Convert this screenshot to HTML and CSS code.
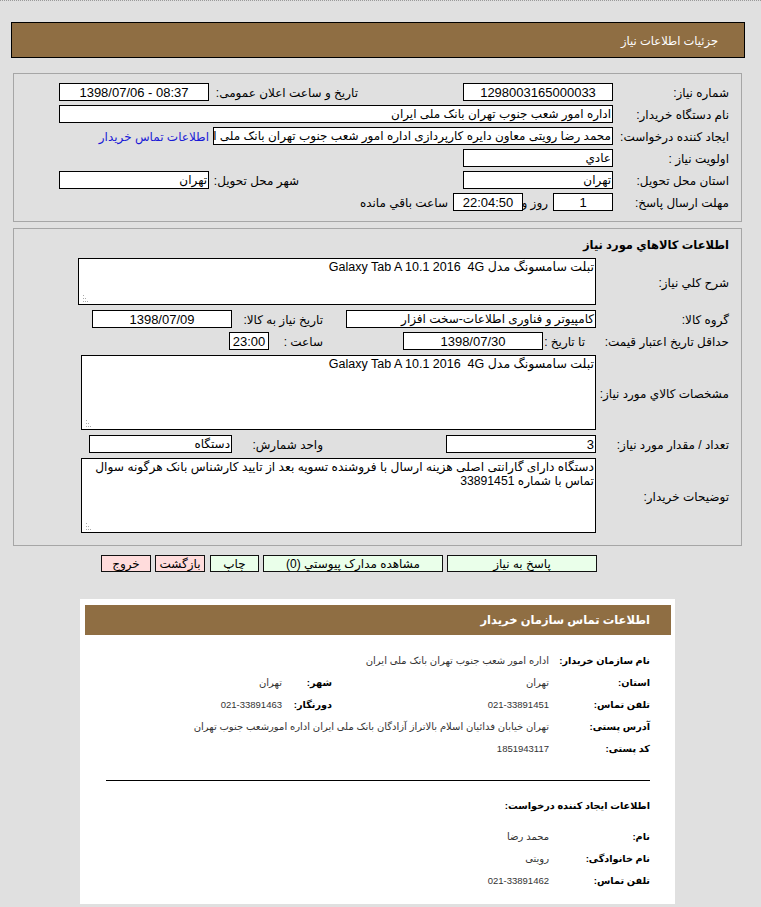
FILE: index.html
```html
<!DOCTYPE html>
<html lang="fa" dir="rtl">
<head>
    <meta charset="UTF-8">
    <title>جزئیات اطلاعات نیاز</title>
    <link rel="stylesheet" href="styles.css">
</head>
<body>
    <header class="page-title">جزئیات اطلاعات نیاز</header>

    <section class="panel panel-info">
        <div class="row cols-info">
            <label>شماره نیاز:</label>
            <div class="field center num">1298003165000033</div>
            <label class="label-mid">تاریخ و ساعت اعلان عمومی:</label>
            <div class="field center num" dir="ltr">1398/07/06 - 08:37</div>
        </div>
        <div class="row cols-info">
            <label>نام دستگاه خریدار:</label>
            <div class="field span-3">اداره امور شعب جنوب تهران بانک ملی ایران</div>
        </div>
        <div class="row cols-creator">
            <label>ایجاد کننده درخواست:</label>
            <div class="field">محمد رضا رویتی معاون دایره کارپردازی اداره امور شعب جنوب تهران بانک ملی ایران</div>
            <a class="contact-link" href="#contact">اطلاعات تماس خریدار</a>
        </div>
        <div class="row cols-info">
            <label>اولویت نیاز :</label>
            <div class="field">عادي</div>
        </div>
        <div class="row cols-info">
            <label>استان محل تحویل:</label>
            <div class="field">تهران</div>
            <label class="label-city">شهر محل تحویل:</label>
            <div class="field">تهران</div>
        </div>
        <div class="row cols-deadline">
            <label>مهلت ارسال پاسخ:</label>
            <div class="field center num">1</div>
            <span class="unit">روز و</span>
            <div class="field center num">22:04:50</div>
            <span class="unit">ساعت باقي مانده</span>
        </div>
    </section>

    <section class="panel panel-goods">
        <h2>اطلاعات كالاهاي مورد نياز</h2>

        <div class="area-row area-short">
            <label>شرح كلي نياز:</label>
            <textarea class="area area-first" readonly>تبلت سامسونگ مدل Galaxy Tab A 10.1 2016  4G</textarea>
        </div>
        <div class="row cols-group">
            <label>گروه کالا:</label>
            <div class="field">کامپیوتر و فناوری اطلاعات-سخت افزار</div>
            <label class="label-date">تاریخ نیاز به کالا:</label>
            <div class="field center num">1398/07/09</div>
        </div>
        <div class="row cols-valid">
            <label>حداقل تاریخ اعتبار قیمت:</label>
            <span class="unit-to">تا تاریخ :</span>
            <div class="field center num">1398/07/30</div>
            <span class="unit-time">ساعت :</span>
            <div class="field center num">23:00</div>
        </div>
        <div class="area-row area-tall">
            <label>مشخصات كالاي مورد نياز:</label>
            <textarea class="area" readonly>تبلت سامسونگ مدل Galaxy Tab A 10.1 2016  4G</textarea>
        </div>
        <div class="row cols-count">
            <label>تعداد / مقدار مورد نیاز:</label>
            <div class="field num">3</div>
            <label class="label-unit">واحد شمارش:</label>
            <div class="field">دستگاه</div>
        </div>
        <div class="area-row area-tall area-notes">
            <label>توضیحات خریدار:</label>
            <textarea class="area" readonly>دستگاه دارای گارانتی اصلی هزینه ارسال با فروشنده تسویه بعد از تایید کارشناس بانک هرگونه سوال تماس با شماره 33891451</textarea>
        </div>
    </section>

    <div class="actions">
        <button class="btn btn-green btn-reply">پاسخ به نیاز</button>
        <button class="btn btn-green btn-docs">مشاهده مدارک پیوستي (0)</button>
        <button class="btn btn-green btn-print">چاپ</button>
        <button class="btn btn-red btn-back">بازگشت</button>
        <button class="btn btn-red btn-exit">خروج</button>
    </div>

    <section class="contact" id="contact">
        <div class="contact-title">اطلاعات تماس سازمان خریدار</div>
        <div class="contact-body">
            <div class="c-row"><b>نام سازمان خریدار:</b><span>اداره امور شعب جنوب تهران بانک ملی ایران</span></div>
            <div class="c-row"><b>استان:</b><span class="c-val">تهران</span><b class="c-label2">شهر:</b><span>تهران</span></div>
            <div class="c-row"><b>تلفن تماس:</b><span class="c-val c-num">021-33891451</span><b class="c-label2">دورنگار:</b><span class="c-num">021-33891463</span></div>
            <div class="c-row"><b>آدرس پستی:</b><span>تهران خیابان فدائیان اسلام بالاتراز آزادگان بانک ملی ایران اداره امورشعب جنوب تهران</span></div>
            <div class="c-row"><b>کد پستی:</b><span class="c-num">1851943117</span></div>
            <hr>
            <h3>اطلاعات ایجاد کننده درخواست:</h3>
            <div class="c-row"><b>نام:</b><span>محمد رضا</span></div>
            <div class="c-row"><b>نام خانوادگی:</b><span>رویتی</span></div>
            <div class="c-row"><b>تلفن تماس:</b><span class="c-num">021-33891462</span></div>
        </div>
    </section>
</body>
</html>
```

FILE: styles.css
```css
html {
    background-color: #e0e0e0;
}

body {
    margin: 0;
    height: 907px;
    overflow: hidden;
    border-top: 1px dotted #999;
    box-sizing: border-box;
    font-family: "Liberation Sans", "DejaVu Sans", sans-serif;
    font-size: 12px;
    color: #000;
}

/* page title bar */
.page-title {
    margin: 21px 16px 0 11px;
    height: 36px;
    line-height: 36px;
    padding-right: 26px;
    box-sizing: border-box;
    background-color: #8f6e43;
    border: 1px solid #000;
    color: #fff;
    font-size: 11.5px;
}

.panel {
    margin: 0 19px 0 13px;
    border: 1px solid #a6a6a6;
    box-sizing: border-box;
}

.panel-info {
    margin-top: 15px;
    height: 149px;
    padding-top: 9px;
}

.panel-goods {
    margin-top: 6px;
    height: 318px;
    padding-top: 8px;
}

.panel h2 {
    margin: 0 12px 5px 0;
    height: 16px;
    line-height: 16px;
    font-size: 11.5px;
}

/* form rows: first column is always the label on the right */
.row {
    display: grid;
    height: 18px;
    margin-bottom: 4px;
    align-items: center;
}

.row label,
.area-row label {
    padding-right: 12px;
    white-space: nowrap;
}

.row label,
.row span {
    padding-top: 1px;
}

.cols-info { grid-template-columns: 128px 150px 254px 150px; }
.cols-creator { grid-template-columns: 128px 400px auto; }
.cols-deadline { grid-template-columns: 128px 60px 30px 70px auto; }
.cols-group { grid-template-columns: 145px 250px 114px 140px; }
.cols-valid { grid-template-columns: 145px 53px 140px 134px 40px; margin-bottom: 5px; }
.cols-count { grid-template-columns: 145px 150px 214px 143px; margin-bottom: 5px; }

.row .label-mid { padding-right: 105px; }
.row .label-city { padding-right: 164px; }
.row .label-date { padding-right: 23px; }
.row .label-unit { padding-right: 123px; }

.span-3 { grid-column: span 3; }

.field {
    height: 18px;
    line-height: 17px;
    box-sizing: border-box;
    padding: 0 1px;
    background-color: #fff;
    border: 1px solid #000;
    white-space: nowrap;
    overflow: hidden;
}

.center { text-align: center; }
.num { font-size: 13px; }

.unit { padding-right: 5px; white-space: nowrap; }
.unit-to { padding-right: 11px; white-space: nowrap; }
.unit-time { padding-right: 80px; white-space: nowrap; }

.contact-link {
    padding: 1px 4px 0 0;
    color: #1a1ad6;
    text-decoration: none;
    white-space: nowrap;
}

/* multi-line rows */
.area-row {
    display: grid;
    grid-template-columns: 145px 515px;
    align-items: center;
}

.area-row label { padding-top: 3px; }

.area-short { height: 47px; margin-bottom: 5px; }
.area-tall { height: 75px; margin-bottom: 5px; }
.area-notes { margin-bottom: 0; }

.area {
    display: block;
    width: 515px;
    height: 75px;
    margin: 0;
    padding: 1px 1px 0;
    box-sizing: border-box;
    background-color: #fff;
    border: 1px solid #000;
    border-radius: 0;
    outline: none;
    overflow: hidden;
    resize: both;
    font: inherit;
    font-size: 12.5px;
    line-height: 14px;
    color: #000;
}

.area-notes .area { font-size: 12.2px; }

.area::-webkit-resizer {
    background: url("data:image/svg+xml,%3Csvg xmlns='http://www.w3.org/2000/svg' width='15' height='15' fill='%23aaa'%3E%3Crect x='4' y='6' width='1' height='1'/%3E%3Crect x='4' y='9' width='1' height='1'/%3E%3Crect x='4' y='12' width='1' height='1'/%3E%3Crect x='6' y='9' width='1' height='1'/%3E%3Crect x='6' y='12' width='1' height='1'/%3E%3Crect x='8' y='12' width='1' height='1'/%3E%3C/svg%3E") no-repeat;
}

.area-first {
    width: 518px;
    height: 47px;
}

/* buttons */
.actions {
    display: flex;
    gap: 4px;
    margin: 9px 164px 0 0;
    height: 17px;
}

.btn {
    height: 17px;
    padding: 0;
    box-sizing: border-box;
    border: 1px solid #111;
    font: inherit;
    line-height: 14px;
    color: #000;
}

.btn-green { background-color: #eaffea; }
.btn-red { background-color: #ffdcdc; }

.btn-reply { width: 150px; }
.btn-docs { width: 180px; }
.btn-print { width: 49px; }
.btn-back { width: 50px; margin-right: 1px; }
.btn-exit { width: 50px; }

/* buyer contact card */
.contact {
    margin: 27px 86px 0 80px;
    height: 305px;
    padding: 6px 4px 0 5px;
    box-sizing: border-box;
    background-color: #fff;
    font-size: 10px;
    color: #333;
}

.contact-title {
    height: 30px;
    line-height: 30px;
    padding-right: 21px;
    background-color: #8f6e43;
    color: #fff;
    font-size: 11.5px;
    font-weight: bold;
}

.contact-body {
    padding: 14px 21px 0 21px;
}

.c-row {
    display: flex;
    align-items: center;
    height: 22px;
    white-space: nowrap;
}

.c-row b {
    width: 101px;
    flex: none;
    color: #000;
    font-size: 9.7px;
}

.c-row .c-val { width: 217px; flex: none; }
.c-row .c-label2 { width: 50px; }
.c-num { font-size: 9.5px; }

.contact hr {
    margin: 21px 0 0;
    border: 0;
    border-top: 1px solid #000;
}

.contact h3 {
    margin: 14px 0 8px;
    height: 22px;
    line-height: 22px;
    font-size: 9.7px;
    color: #000;
}
```
